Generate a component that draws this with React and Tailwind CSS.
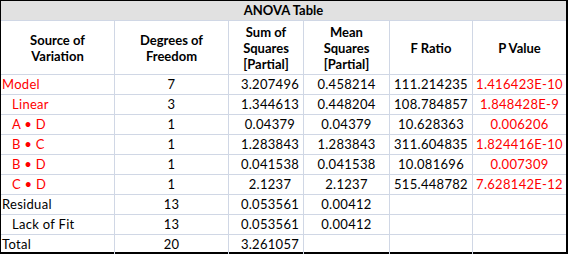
const rows = [
  { name: 'Model', indent: false, red: true, df: '7', ss: '3.207496', ms: '0.458214', f: '111.214235', p: '1.416423E-10' },
  { name: 'Linear', indent: true, red: true, df: '3', ss: '1.344613', ms: '0.448204', f: '108.784857', p: '1.848428E-9' },
  { name: 'A • D', indent: true, red: true, df: '1', ss: '0.04379', ms: '0.04379', f: '10.628363', p: '0.006206' },
  { name: 'B • C', indent: true, red: true, df: '1', ss: '1.283843', ms: '1.283843', f: '311.604835', p: '1.824416E-10' },
  { name: 'B • D', indent: true, red: true, df: '1', ss: '0.041538', ms: '0.041538', f: '10.081696', p: '0.007309' },
  { name: 'C • D', indent: true, red: true, df: '1', ss: '2.1237', ms: '2.1237', f: '515.448782', p: '7.628142E-12' },
  { name: 'Residual', indent: false, red: false, df: '13', ss: '0.053561', ms: '0.00412', f: '', p: '' },
  { name: 'Lack of Fit', indent: true, red: false, df: '13', ss: '0.053561', ms: '0.00412', f: '', p: '' },
  { name: 'Total', indent: false, red: false, df: '20', ss: '3.261057', ms: '', f: '', p: '' },
];

const cols = 'grid grid-cols-[114px_114px_75px_86px_83px_1fr]';
const cell = 'flex items-center justify-center border-r border-[#d0d7e5]';

export default function App() {
  return (
    <div className="h-[254px] w-[568px] bg-white font-['Lato',sans-serif] text-[13px] text-black">
      <div className="flex h-full w-full flex-col border-t border-l border-r-2 border-b-2 border-black">
        <div className="flex h-[20px] items-center justify-center border-b border-[#d0d7e5] bg-[#e1e1e1] font-bold">
          ANOVA Table
        </div>
        <div className={`${cols} h-[54px] border-b border-[#d0d7e5] text-center font-bold leading-[16px]`}>
          <div className={cell}>Source of<br />Variation</div>
          <div className={cell}>Degrees of<br />Freedom</div>
          <div className={cell}>Sum of<br />Squares<br />[Partial]</div>
          <div className={cell}>Mean<br />Squares<br />[Partial]</div>
          <div className={cell}>F Ratio</div>
          <div className="flex items-center justify-center">P Value</div>
        </div>
        {rows.map((r, i) => {
          const last = i === rows.length - 1;
          return (
            <div
              key={r.name}
              className={`${cols} tracking-[0.3px] ${last ? 'h-[17px]' : 'h-[20px] border-b border-[#d0d7e5]'}`}
            >
              <div
                className={`flex items-center border-r border-[#d0d7e5] ${r.indent ? 'pl-[11px]' : 'pl-[1px]'} ${r.red ? 'text-[#ff0000]' : ''}`}
              >
                {r.name}
              </div>
              <div className={cell}>{r.df}</div>
              <div className={`${cell} pl-[8px]`}>{r.ss}</div>
              <div className={cell}>{r.ms}</div>
              <div className={cell}>{r.f}</div>
              <div className="flex items-center justify-center text-[#ff0000]">{r.p}</div>
            </div>
          );
        })}
      </div>
    </div>
  );
}
